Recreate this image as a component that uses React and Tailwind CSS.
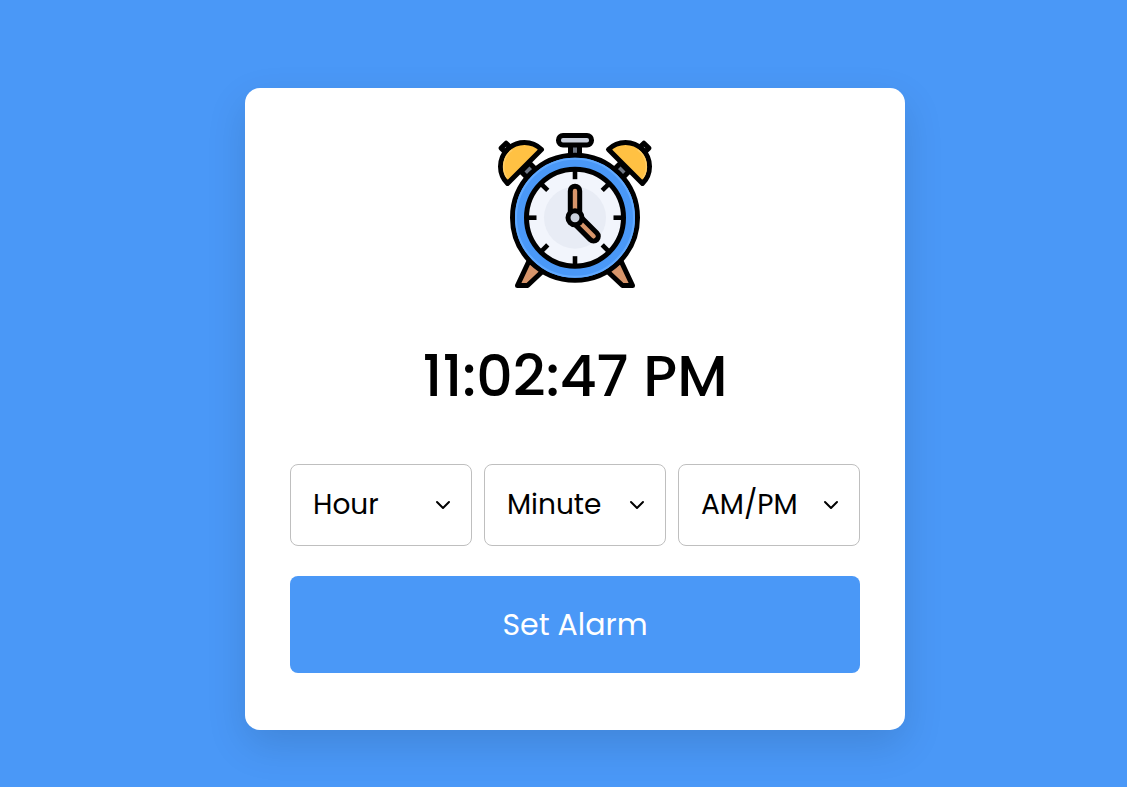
import { ChevronDown } from "lucide-react";

const TICKS = [0, 45, 90, 135, 180, 225, 270, 315];

function Bell() {
  return (
    <g>
      <path d="M-6 1V12H6V1Z" fill="#6f7785" />
      <path d="M-3.500 -24V-29.500H3.500V-24Z" fill="#d5dae3" />
      <path d="M-24 0A24 24 0 0 1 24 0Z" fill="#ffc143" />
      <path d="M-20.5 -4A20.5 20.5 0 0 1 3 -20.4" fill="none" stroke="#ffcd66" strokeWidth="1.500" />
    </g>
  );
}

function Leg() {
  return <path d="M19.500 152.500L31 128L46 137L29.500 152.500Z" fill="#d7956a" />;
}

function AlarmClock() {
  return (
    <svg
      width="154"
      height="155"
      viewBox="0 0 154 155"
      role="img"
      aria-label="Alarm clock"
      stroke="#000"
      strokeWidth="5"
      strokeLinejoin="round"
    >
      <Leg />
      <g transform="translate(154 0) scale(-1 1)">
        <Leg />
      </g>
      <path d="M72.500 11V24H81.500V11Z" fill="#6f7785" />
      <rect x="60.500" y="2.500" width="33" height="9.500" rx="4.500" fill="#cbd1dd" />
      <g transform="translate(26.500 33.500) rotate(-45)">
        <Bell />
      </g>
      <g transform="translate(127.500 33.500) scale(-1 1) rotate(-45)">
        <Bell />
      </g>
      <g transform="translate(77 84.700)">
        <circle r="62.500" fill="#4a98f7" />
        <circle r="59" fill="none" stroke="#60a9ff" strokeWidth="2" />
        <circle r="48.500" fill="#f2f5fc" />
        <circle r="31" fill="#e8ecf5" stroke="none" />
        {TICKS.map((angle) => (
          <path key={angle} d="M0 -48V-38.500" strokeWidth="4.600" transform={`rotate(${angle})`} />
        ))}
        <rect x="-4.700" y="-31.500" width="9.400" height="34" rx="4.700" fill="#d7956a" />
        <rect x="-4.700" y="-31" width="9.400" height="32" rx="4.700" fill="#d7956a" transform="rotate(135)" />
        <circle r="7" fill="#cbd1dd" />
      </g>
    </svg>
  );
}

function Picker({ label, options }) {
  return (
    <div className="relative flex-1">
      <select
        aria-label={label}
        defaultValue=""
        className="h-[82px] w-full appearance-none rounded-lg border border-[#bfbfbf] bg-white pr-10 pl-[22px] text-[28px] leading-[48px] text-black outline-none"
      >
        <option value="">{label}</option>
        {options.map((option) => (
          <option key={option} value={option}>
            {option}
          </option>
        ))}
      </select>
      <ChevronDown
        className="pointer-events-none absolute inset-y-0 right-[17px] my-auto size-6 text-black"
        strokeWidth={2}
        aria-hidden="true"
      />
    </div>
  );
}

const pad = (n) => String(n).padStart(2, "0");
const HOURS = Array.from({ length: 12 }, (_, i) => pad(i + 1));
const MINUTES = Array.from({ length: 60 }, (_, i) => pad(i));

export default function App() {
  return (
    <main className="flex min-h-screen items-center justify-center bg-[#4a98f7] pt-[31px] pl-[23px] font-['Poppins','Inter',sans-serif] text-black">
      <section className="flex w-full max-w-[660px] flex-col items-center rounded-[15px] bg-white px-[45px] pt-[45px] pb-[57px] shadow-[0_15px_40px_rgba(0,0,0,0.12)]">
        <AlarmClock />
        <h1 className="my-12 text-[57px] leading-[80px] font-medium">11:02:47 PM</h1>
        <form className="flex w-full flex-col gap-[30px]" onSubmit={(e) => e.preventDefault()}>
          <div className="flex gap-3">
            <Picker label="Hour" options={HOURS} />
            <Picker label="Minute" options={MINUTES} />
            <Picker label="AM/PM" options={["AM", "PM"]} />
          </div>
          <button type="submit" className="h-[97px] w-full rounded-lg bg-[#4a98f7] text-[30px] text-white">
            Set Alarm
          </button>
        </form>
      </section>
    </main>
  );
}
